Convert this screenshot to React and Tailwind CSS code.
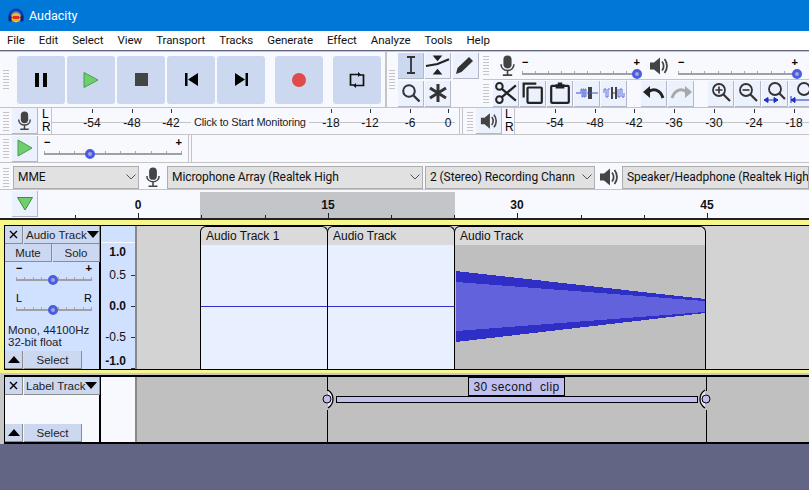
import React from 'react';

const menus = ['File', 'Edit', 'Select', 'View', 'Transport', 'Tracks', 'Generate', 'Effect', 'Analyze', 'Tools', 'Help'];

const Grip = ({ className = '' }) => (
  <div className={`w-[6px] flex flex-col justify-center gap-[2px] shrink-0 ${className}`}>
    {Array.from({ length: 7 }).map((_, i) => <div key={i} className="h-px bg-[#c4c4c4]" />)}
  </div>
);

const MicIcon = ({ size = 18, color = '#444' }) => (
  <svg width={size} height={size} viewBox="0 0 18 18">
    <rect x="5.5" y="0.5" width="7" height="11" rx="3.5" fill={color} />
    <path d="M3.5 8 C3.5 15 14.5 15 14.5 8 M9 13.5 V17 M5 17.3 H13" stroke={color} strokeWidth="1.4" fill="none" />
  </svg>
);

const SpeakerIcon = ({ size = 20, color = '#444' }) => (
  <svg width={size} height={size} viewBox="0 0 20 20">
    <path d="M1 6.5 H5 L11 1.5 V18.5 L5 13.5 H1 Z" fill={color} />
    <path d="M13 5.5 C15.2 8 15.2 12 13 14.5 M15.5 3 C18.8 7 18.8 13 15.5 17" stroke={color} strokeWidth="1.8" fill="none" />
  </svg>
);

const TransportButton = ({ className = '', children }) => (
  <div className={`w-[48px] h-[48px] rounded-[3px] bg-[#ccd8f0] flex items-center justify-center ${className}`}>{children}</div>
);

const SmallButton = ({ pressed, className = '', children }) => (
  <div className={`w-[26px] h-[26px] flex items-center justify-center border-r border-b border-[#b4b8c4] shrink-0 ${pressed ? 'bg-[#ccd8f0]' : 'bg-[#ebf1fd]'} ${className}`}>{children}</div>
);

const SliderBar = ({ width, pos, signs = ['−', '+'], plain }) => (
  <div className="relative h-[23px] shrink-0" style={{ width }}>
    <span className={`absolute left-0 top-[-3px] text-[11px] leading-[14px] text-black ${plain ? '' : 'font-bold'}`}>{signs[0]}</span>
    <span className={`absolute right-0 top-[-3px] text-[11px] leading-[14px] text-black ${plain ? '' : 'font-bold'}`}>{signs[1]}</span>
    <div className="absolute left-0 right-0 top-[15px] h-[2px] bg-[#a0a0a0]" />
    {Array.from({ length: 10 }).map((_, i) => (
      <div key={i} className="absolute top-[13px] w-px h-[2px] bg-[#a8a8a8]" style={{ left: (i * (width - 1)) / 9 }} />
    ))}
    <div
      className="absolute top-[11px] w-[10px] h-[10px] rounded-full border-[3px] border-[#4a5ce0] bg-[#a0a8d8]"
      style={{ left: pos - 5 }}
    />
  </div>
);

const MeterRuler = ({ labels, className = '' }) => (
  <div className={`relative h-[26px] bg-[#f8f9ff] ${className}`}>
    <div className="absolute left-0 right-0 top-[14px] h-px bg-[#c4c4c4]" />
    {labels.map(([text, x]) => (
      <React.Fragment key={text}>
        <div className="absolute top-[1px] w-px h-[4px] bg-[#333]" style={{ left: x }} />
        <span className="absolute top-[7px] -translate-x-1/2 text-[12px] leading-[16px] text-[#111]" style={{ left: x }}>{text}</span>
      </React.Fragment>
    ))}
  </div>
);

const LR = () => (
  <div className="w-[11px] flex flex-col text-[12px] leading-[13px] text-black pl-px border-r border-[#c4c4c4]">
    <span>L</span>
    <span>R</span>
  </div>
);

const Chevron = () => (
  <svg width="10" height="6" viewBox="0 0 10 6" className="shrink-0">
    <path d="M0.5 0.5 L5 5 L9.5 0.5" stroke="#555" strokeWidth="1" fill="none" />
  </svg>
);

const Select = ({ label, className = '', noChevron }) => (
  <div className={`h-[23px] bg-[#e1e1e1] border border-[#adadad] flex items-center pl-[4px] pr-[2px] justify-between overflow-hidden ${className}`}>
    <span className="whitespace-nowrap text-[12px] tracking-[-0.07px] leading-[16px] text-[#111] font-['Roboto',sans-serif]">{label}</span>
    {!noChevron && <Chevron />}
  </div>
);

const Triangle = ({ up, className = '' }) => (
  <svg width="12" height="7" viewBox="0 0 12 7" className={`shrink-0 ${className}`}>
    <path d={up ? 'M0 7 L6 0 L12 7 Z' : 'M0 0 H12 L6 7 Z'} fill="#000" />
  </svg>
);

const CloseX = () => (
  <svg width="9" height="9" viewBox="0 0 9 9"><path d="M1 1 L8 8 M8 1 L1 8" stroke="#000" strokeWidth="1.4" /></svg>
);

const PanelButton = ({ className = '', children }) => (
  <div className={`h-[18px] bg-[#ccd8f0] border-r border-b border-[#8c8c8c] flex items-center justify-center text-[11.5px] leading-[14px] text-[#222] shrink-0 ${className}`}>{children}</div>
);

const TrackHeader = ({ title }) => (
  <div className="flex h-[18px] gap-px">
    <PanelButton className="w-[18px]"><CloseX /></PanelButton>
    <PanelButton className="w-[76px] !justify-between pl-[2px] pr-[2px]">
      <span className="whitespace-nowrap">{title}</span>
      <Triangle />
    </PanelButton>
  </div>
);

const PanelFooter = () => (
  <div className="flex h-[18px] gap-px">
    <PanelButton className="w-[18px]"><Triangle up /></PanelButton>
    <PanelButton className="w-[58px]">Select</PanelButton>
  </div>
);

const Clip = ({ left, width, title, body, children }) => (
  <div className="absolute top-0 bottom-0 flex flex-col" style={{ left, width }}>
    <div className="h-[19px] bg-[#dadada] border-t border-x border-black rounded-t-[6px] pl-[5px] text-[12px] leading-[18px] text-[#111] whitespace-nowrap overflow-hidden">{title}</div>
    <div className={`flex-1 border-x border-black relative ${body}`}>{children}</div>
  </div>
);

const LabelHandle = ({ left, flip }) => (
  <svg width="14" height="20" viewBox="0 0 14 20" className={`absolute top-[12px] ${flip ? '-scale-x-100' : ''}`} style={{ left }}>
    <path d="M6 1 C9 3 11 6 11 10 C11 14 9 17 6 19" stroke="#000" strokeWidth="1.3" fill="#e8e8f8" />
    <circle cx="5" cy="10" r="4" fill="#c0c0f0" stroke="#000" />
  </svg>
);

export default function App() {
  const timeTicks = Array.from({ length: 11 }, (_, i) => 75 + i * 63.2);
  const timeLabels = [['0', 138], ['15', 328], ['30', 517], ['45', 707]];
  const yLabels = [['1.0', 26, true], ['0.5', 49], ['0.0', 80, true], ['-0.5', 111], ['-1.0', 135, true]];

  return (
    <div className="relative w-[809px] h-[490px] overflow-hidden bg-[#626584] flex flex-col font-['Liberation_Sans',sans-serif]">
      {/* Title bar */}
      <div className="h-[31px] bg-[#0078d7] flex items-center pl-[8px] gap-[5px] shrink-0">
        <svg width="16" height="16" viewBox="0 0 16 16">
          <path d="M1.5 10 V8 A6.5 6.5 0 0 1 14.5 8 V10" stroke="#1c2f9c" strokeWidth="2" fill="none" />
          <circle cx="8" cy="9.5" r="5" fill="#f0b030" />
          <path d="M3.5 9.5 H12.5 M5 8.5 H11 M5 10.5 H11" stroke="#e03020" strokeWidth="1" />
          <rect x="0.5" y="7.5" width="3" height="6" rx="1.3" fill="#14207c" />
          <rect x="12.5" y="7.5" width="3" height="6" rx="1.3" fill="#14207c" />
        </svg>
        <span className="text-[12.5px] pt-px text-white font-['Roboto',sans-serif]">Audacity</span>
      </div>

      {/* Menu bar */}
      <div className="h-[19px] bg-white flex items-center pl-[7px] pt-px gap-[14px] shrink-0 text-[11.5px] tracking-[-0.05px] text-[#111] font-['Roboto',sans-serif]">
        {menus.map((m) => <span key={m}>{m}</span>)}
      </div>

      {/* Toolbars */}
      <div className="h-[55px] mt-px bg-[#f8f9ff] border-y border-[#c4c4c4] flex shrink-0 box-content">
        <div className="w-[387px] flex items-center pl-[3px] border-r-2 border-[#c4c4c4] shrink-0">
          <Grip className="mr-[8px]" />
          <div className="flex gap-[2px]">
            <TransportButton>
              <svg width="14" height="14" viewBox="0 0 14 14"><path d="M1 0 H5 V14 H1 Z M9 0 H13 V14 H9 Z" fill="#000" /></svg>
            </TransportButton>
            <TransportButton>
              <svg width="16" height="16" viewBox="0 0 16 16"><path d="M1 0.5 L15 8 L1 15.5 Z" fill="#6fcf6f" stroke="#4a9a4a" /></svg>
            </TransportButton>
            <TransportButton>
              <svg width="13" height="13" viewBox="0 0 13 13"><rect width="13" height="13" fill="#444" /></svg>
            </TransportButton>
            <TransportButton>
              <svg width="13" height="13" viewBox="0 0 13 13"><path d="M0 0 H2.5 V13 H0 Z M13 0 V13 L3 6.5 Z" fill="#000" /></svg>
            </TransportButton>
            <TransportButton>
              <svg width="13" height="13" viewBox="0 0 13 13"><path d="M13 0 H10.5 V13 H13 Z M0 0 V13 L10 6.5 Z" fill="#000" /></svg>
            </TransportButton>
          </div>
          <TransportButton className="ml-[10px]">
            <div className="w-[14px] h-[14px] rounded-full bg-[#e04a4a]" />
          </TransportButton>
          <TransportButton className="ml-[10px]">
            <svg width="16" height="16" viewBox="0 0 16 16">
              <path d="M9 2.5 H1.5 V13 H5 M7 13.5 H14.5 V3 H11" stroke="#111" strokeWidth="1.7" fill="none" />
              <path d="M9 0 L12 2.5 L9 5 Z M7 11 L4 13.5 L7 16 Z" fill="#111" />
            </svg>
          </TransportButton>
        </div>

        <div className="flex items-center pl-[2px] pr-[5px] shrink-0">
          <Grip className="mr-[1px]" />
          <div className="grid grid-cols-3 gap-[2px] w-[82px] pl-[2px]">
            <SmallButton pressed>
              <svg width="12" height="18" viewBox="0 0 12 18"><path d="M2 1 H10 M6 1 V17 M2 17 H10" stroke="#333" strokeWidth="1.8" /></svg>
            </SmallButton>
            <SmallButton>
              <svg width="26" height="20" viewBox="0 0 26 20"><path d="M8 0 H18 L13 6 Z M8 20 H18 L13 14 Z" fill="#222" /><path d="M1 11 L13 9 L25 4" stroke="#222" strokeWidth="2.2" fill="none" /></svg>
            </SmallButton>
            <SmallButton>
              <svg width="20" height="20" viewBox="0 0 20 20"><path d="M1 19 L2.5 13 L14 2 L18 6 L6.5 17 Z" fill="#333" /></svg>
            </SmallButton>
            <SmallButton>
              <svg width="20" height="20" viewBox="0 0 20 20"><circle cx="8" cy="8" r="5.8" stroke="#333" strokeWidth="2" fill="none" /><path d="M12.5 12.5 L18.5 18.5" stroke="#333" strokeWidth="2.4" /></svg>
            </SmallButton>
            <SmallButton>
              <svg width="20" height="20" viewBox="0 0 20 20"><path d="M10 1 V19 M2 5 L18 15 M18 5 L2 15" stroke="#333" strokeWidth="3" /></svg>
            </SmallButton>
          </div>
        </div>

        <div className="flex-1 flex flex-col min-w-0">
          <div className="h-[28px] flex border-b border-[#c4c4c4] overflow-hidden shrink-0">
            <Grip className="mr-[6px]" />
            <div className="w-[24px] flex items-center justify-center"><MicIcon size={21} /></div>
            <div className="pt-[6px] ml-[3px] flex">
              <SliderBar width={118} pos={115} />
              <div className="w-[38px] flex justify-center -mt-[6px] items-center"><SpeakerIcon size={20} /></div>
              <SliderBar width={120} pos={119} />
            </div>
          </div>
          <div className="flex-1 flex items-center overflow-hidden">
            <Grip className="mr-[4px]" />
            <div className="flex gap-px">
              <SmallButton>
                <svg width="22" height="22" viewBox="0 0 20 20"><circle cx="4" cy="16" r="3" stroke="#222" strokeWidth="1.8" fill="none" /><circle cx="4" cy="4" r="3" stroke="#222" strokeWidth="1.8" fill="none" /><path d="M6 6 L19 17 M6 14 L19 3" stroke="#222" strokeWidth="2" /></svg>
              </SmallButton>
              <SmallButton>
                <svg width="22" height="22" viewBox="0 0 20 20"><path d="M1.5 14 V1.5 H13" stroke="#222" strokeWidth="2" fill="none" /><rect x="5" y="5" width="13" height="14" rx="1" stroke="#222" strokeWidth="2" fill="none" /></svg>
              </SmallButton>
              <SmallButton>
                <svg width="22" height="22" viewBox="0 0 20 20"><rect x="2" y="3.5" width="16" height="15.5" rx="1" stroke="#222" strokeWidth="2" fill="none" /><path d="M6 2 H8 V0.5 H12 V2 H14 V6 H6 Z" fill="#222" /></svg>
              </SmallButton>
              <SmallButton>
                <svg width="22" height="14" viewBox="0 0 22 14"><path d="M0 7 H5 M17 7 H22" stroke="#3a50d0" /><path d="M5 7 V3 H6 V11 H7 V3 H8 V11 H9 V3 H10 V11" stroke="#6070e0" fill="none" /><rect x="12" y="1" width="4" height="12" fill="#444" /><path d="M11 7 H17" stroke="#3a50d0" /></svg>
              </SmallButton>
              <SmallButton>
                <svg width="22" height="14" viewBox="0 0 22 14"><path d="M1 7 V3 H3 V11 H5 V3 H7 M15 3 V11 H17 V3 H19 V11 H21 V7" stroke="#6070e0" fill="none" /><path d="M9 1 V13 M13 1 V13" stroke="#444" strokeWidth="2" /><path d="M9 7 H13" stroke="#444" /></svg>
              </SmallButton>
            </div>
            <div className="flex gap-px ml-[14px]">
              <SmallButton>
                <svg width="22" height="14" viewBox="0 0 22 14"><path d="M0 6 L7 0 V12 Z" fill="#222" /><path d="M5 6 C10 2 17 3 20 12" stroke="#222" strokeWidth="3" fill="none" /></svg>
              </SmallButton>
              <SmallButton>
                <svg width="22" height="14" viewBox="0 0 22 14"><path d="M22 6 L15 0 V12 Z" fill="#a8a8a8" /><path d="M17 6 C12 2 5 3 2 12" stroke="#a8a8a8" strokeWidth="3" fill="none" /></svg>
              </SmallButton>
            </div>
            <div className="flex gap-px ml-[14px]">
              <SmallButton>
                <svg width="20" height="20" viewBox="0 0 20 20"><circle cx="8" cy="7" r="6" stroke="#333" strokeWidth="1.8" fill="none" /><path d="M4.5 7 H11.5 M8 3.5 V10.5" stroke="#333" strokeWidth="1.6" /><path d="M12.5 11.5 L19 18" stroke="#333" strokeWidth="2.2" /></svg>
              </SmallButton>
              <SmallButton>
                <svg width="20" height="20" viewBox="0 0 20 20"><circle cx="8" cy="7" r="6" stroke="#333" strokeWidth="1.8" fill="none" /><path d="M4.5 7 H11.5" stroke="#333" strokeWidth="1.6" /><path d="M12.5 11.5 L19 18" stroke="#333" strokeWidth="2.2" /></svg>
              </SmallButton>
              <SmallButton>
                <svg width="24" height="22" viewBox="0 0 24 22"><circle cx="12" cy="7" r="6" stroke="#333" strokeWidth="1.8" fill="none" /><path d="M16.5 11.5 L22 17" stroke="#333" strokeWidth="2.2" /><path d="M1 18 H15 M5 15.5 L1 18 L5 20.5 Z M11 15.5 L15 18 L11 20.5 Z" stroke="#2030c0" fill="#2030c0" /></svg>
              </SmallButton>
              <SmallButton>
                <svg width="24" height="22" viewBox="0 0 24 22"><circle cx="14" cy="7" r="6" stroke="#333" strokeWidth="1.8" fill="none" /><path d="M1 14 V21 M1 18 H23 M5 15.5 L1 18 L5 20.5 Z" stroke="#2030c0" fill="#2030c0" /></svg>
              </SmallButton>
            </div>
          </div>
        </div>
      </div>

      {/* Meter row */}
      <div className="h-[26px] bg-[#f8f9ff] border-b border-[#c4c4c4] flex items-center shrink-0 box-content">
        <Grip className="ml-[3px] mr-[3px]" />
        <SmallButton><MicIcon size={19} /></SmallButton>
        <div className="w-[3px]" />
        <LR />
        <MeterRuler className="w-[403px]" labels={[['-54', 40], ['-48', 80], ['-42', 119], ['-18', 279], ['-12', 318], ['-6', 358], ['0', 396]]} />
        <div className="w-[4px] h-full border-x border-[#c4c4c4] ml-[4px] mr-[4px]" />
        <Grip className="mr-[3px]" />
        <SmallButton><SpeakerIcon size={18} /></SmallButton>
        <div className="w-[2px]" />
        <LR />
        <MeterRuler className="flex-1" labels={[['-54', 40], ['-48', 80], ['-42', 119], ['-36', 159], ['-30', 199], ['-24', 239], ['-18', 279]]} />
      </div>
      <div className="absolute left-[191px] top-[114px] h-[16px] bg-[#f8f9ff] px-[3px] text-[11px] tracking-[-0.2px] leading-[16px] text-[#222] whitespace-nowrap">Click to Start Monitoring</div>

      {/* Play at speed */}
      <div className="h-[27px] bg-[#f8f9ff] border-b border-[#c4c4c4] flex items-center shrink-0 box-content">
        <Grip className="ml-[3px] mr-[3px]" />
        <SmallButton>
          <svg width="16" height="18" viewBox="0 0 16 18"><path d="M1 1 L15 9 L1 17 Z" fill="#6fcf6f" stroke="#4a9a4a" /></svg>
        </SmallButton>
        <div className="ml-[6px] pt-[1px]"><SliderBar width={138} pos={46} /></div>
        <div className="w-[4px] h-full border-x border-[#c4c4c4] ml-[6px]" />
      </div>

      {/* Device row */}
      <div className="h-[24px] pt-[2px] bg-[#f8f9ff] border-b border-[#c4c4c4] flex items-center shrink-0 box-content">
        <Grip className="ml-[3px] mr-[4px]" />
        <Select label="MME" className="w-[126px] pr-[2px]" />
        <div className="w-[28px] flex justify-center"><MicIcon size={20} /></div>
        <Select label="Microphone Array (Realtek High" className="w-[256px]" />
        <div className="w-[2px]" />
        <Select label="2 (Stereo) Recording Chann" className="w-[170px]" />
        <div className="w-[27px] flex justify-center"><SpeakerIcon size={20} /></div>
        <Select label="Speaker/Headphone (Realtek High" className="flex-1 min-w-0 !pr-0" noChevron />
      </div>

      {/* Timeline ruler */}
      <div className="h-[30px] bg-[#f8f9ff] flex items-center shrink-0 relative border-b-2 border-[#222]">
        <SmallButton className="ml-[12px]">
          <svg width="16" height="14" viewBox="0 0 16 14"><path d="M0.5 0.5 H15.5 L8 13 Z" fill="#6fcf6f" stroke="#3e8e3e" /></svg>
        </SmallButton>
        <div className="absolute left-[200px] top-[2px] bottom-0 w-[255px] bg-[#c4c5c9]" />
        {timeTicks.map((x, i) => (
          <div key={i} className={`absolute bottom-0 w-px bg-[#222] ${i % 3 === 1 ? 'h-[5px]' : 'h-[3px]'}`} style={{ left: Math.round(x) }} />
        ))}
        {timeLabels.map(([t, x]) => (
          <span key={t} className="absolute top-[8px] -translate-x-1/2 text-[12px] leading-[14px] font-bold text-[#111]" style={{ left: x }}>{t}</span>
        ))}
      </div>

      {/* Audio track */}
      <div className="h-[155px] shrink-0 bg-[#f6f68c] pt-[5px] pl-[4px] pb-[3px] border-b-[2px] border-[#c8c8c8]">
        <div className="h-full flex border-t border-l border-b border-black bg-[#d3d3d3]">
          <div className="w-[96px] bg-[#d0e0ff] border-r-2 border-black flex flex-col shrink-0">
            <TrackHeader title="Audio Track" />
            <div className="flex h-[18px] gap-px">
              <PanelButton className="w-[47px]">Mute</PanelButton>
              <PanelButton className="w-[47px]">Solo</PanelButton>
            </div>
            <div className="flex-1 flex flex-col pl-[11px] pt-[2px] text-[10px] text-[#111]">
              <SliderBar width={76} pos={37} />
              <div className="h-[7px]" />
              <SliderBar width={76} pos={37} signs={['L', 'R']} plain />
              <div className="-ml-[8px] mt-[7px] text-[11.5px] leading-[12px] text-[#222] whitespace-nowrap">Mono, 44100Hz<br />32-bit float</div>
            </div>
            <PanelFooter />
          </div>
          <div className="w-[36px] bg-[#d0e0ff] border-r-2 border-[#888] relative shrink-0">
            <div className="h-[17px] border-b border-[#f8f9ff]" />
            {yLabels.map(([t, y, bold]) => (
              <span key={t} className={`absolute right-[9px] text-[12px] leading-[14px] text-[#111] ${bold ? 'font-bold' : ''}`} style={{ top: y - 7 }}>{t}</span>
            ))}
            {[49, 80, 111, 142].map((y) => (
              <div key={y} className="absolute right-0 w-[4px] h-px bg-[#333]" style={{ top: y }} />
            ))}
          </div>
          <div className="flex-1 relative">
            <Clip left={63} width={128} title="Audio Track 1" body="bg-[#e8f0ff]">
              <div className="absolute left-0 right-0 top-[61px] h-px bg-[#3232c8]" />
            </Clip>
            <Clip left={190} width={128} title="Audio Track" body="bg-[#e8f0ff]">
              <div className="absolute left-0 right-0 top-[61px] h-px bg-[#3232c8]" />
            </Clip>
            <Clip left={317} width={252} title="Audio Track" body="bg-[#bfbfbf]">
              <svg width="250" height="125" viewBox="0 0 250 125" shapeRendering="crispEdges" className="absolute left-0 top-0">
                <path d="M1 26 L250 54 V68 L1 97 Z" fill="#2f2fc8" />
                <path d="M1 37 L250 56 V67 L1 86 Z" fill="#6262dc" />
              </svg>
            </Clip>
          </div>
        </div>
      </div>

      {/* Label track */}
      <div className="h-[69px] shrink-0 pl-[4px] bg-[#c8c8c8]">
        <div className="h-full flex border-t-2 border-l border-b-2 border-black bg-[#c0c0c0]">
          <div className="w-[96px] bg-[#f8f9ff] border-r-2 border-black flex flex-col justify-between shrink-0">
            <TrackHeader title="Label Track" />
            <PanelFooter />
          </div>
          <div className="w-[36px] bg-[#f8f9ff] border-r-2 border-[#888] shrink-0" />
          <div className="flex-1 relative">
            <div className="absolute left-[190px] top-0 h-[14px] w-px bg-black" />
            <div className="absolute left-[190px] top-[33px] bottom-0 w-px bg-black" />
            <div className="absolute left-[569px] top-0 h-[14px] w-px bg-black" />
            <div className="absolute left-[569px] top-[33px] bottom-0 w-px bg-black" />
            <LabelHandle left={185} />
            <LabelHandle left={560} flip />
            <div className="absolute left-[199px] top-[19px] w-[362px] h-[7px] bg-[#c0c0f0] border border-black" />
            <div className="absolute left-[331px] top-0 w-[97px] h-[19px] bg-[#c0c0f0] border border-black flex items-center justify-center text-[12px] tracking-[0.4px] text-[#111] whitespace-pre">30 second  clip</div>
          </div>
        </div>
      </div>
    </div>
  );
}
